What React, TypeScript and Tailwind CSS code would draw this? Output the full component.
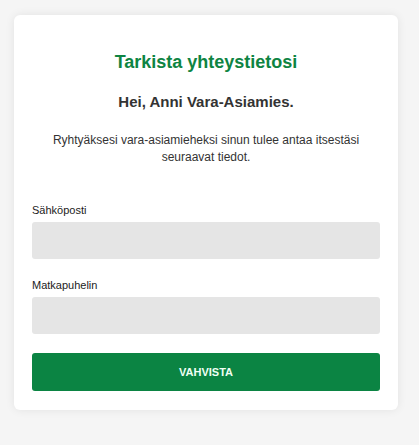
export default function App() {
  return (
    <div className="min-h-[445px] bg-[#f5f5f5] px-[14px] pt-[15px] font-['Liberation_Sans',Arial,sans-serif]">
      <div className="w-[384px] rounded-[6px] bg-white px-[18px] pt-[36px] pb-[19px] shadow-[0_0_10px_rgba(0,0,0,0.08)]">
        <h1 className="text-center text-[18px] leading-[22px] font-bold text-[#0e8442]">Tarkista yhteystietosi</h1>
        <h2 className="mt-[19px] text-center text-[15px] leading-[20px] font-bold text-[#333333]">Hei, Anni Vara-Asiamies.</h2>
        <p className="mt-[20px] px-[10px] text-center text-[12px] leading-[17px] text-[#333333]">
          Ryhtyäksesi vara-asiamieheksi sinun tulee antaa itsestäsi seuraavat tiedot.
        </p>

        <form className="mt-[37px]" onSubmit={e => e.preventDefault()}>
          <label className="block text-[11px] leading-[14px] text-[#222222]">Sähköposti</label>
          <input type="email" className="mt-[5px] block h-[37px] w-full rounded-[3px] bg-[#e5e5e5] px-3 text-[12px] outline-none" />

          <label className="mt-[19px] block text-[11px] leading-[14px] text-[#222222]">Matkapuhelin</label>
          <input type="tel" className="mt-[5px] block h-[37px] w-full rounded-[3px] bg-[#e5e5e5] px-3 text-[12px] outline-none" />

          <button type="submit" className="mt-[19px] block h-[38px] w-full rounded-[3px] bg-[#0b8443] text-[11px] font-bold text-[#f0fff4]">
            VAHVISTA
          </button>
        </form>
      </div>
    </div>
  );
}
